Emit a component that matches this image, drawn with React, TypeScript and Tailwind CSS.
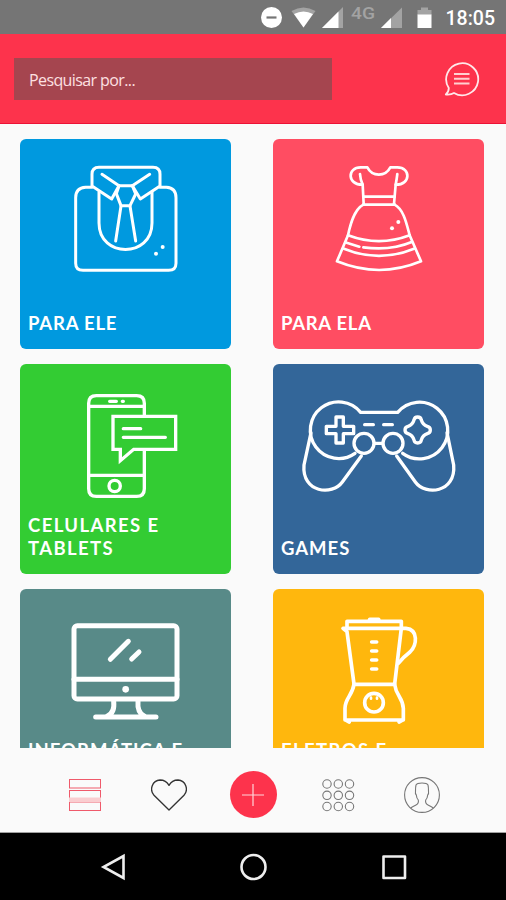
import React from 'react';

const strokeProps = {
  fill: 'none',
  stroke: 'currentColor',
  strokeLinecap: 'round' as const,
  strokeLinejoin: 'round' as const
};

function ShirtIcon() {
  return (
    <svg viewBox="15 12 633 450" className="w-full h-[150px]" {...strokeProps} strokeWidth={9}>
      <path d="M231 157 L212 157 Q182 159 182 188 V385 Q182 406 204 406 H461 Q483 406 483 385 V188 Q483 159 454 157 L435 157" />
      <path d="M312 152 L290 192 L231 153 V118 Q231 97 252 97 H414 Q435 97 435 118 V153 L376 192 L352 152" />
      <path d="M261 118 L312 152 M404 118 L352 152" />
      <path d="M312 152 H352 M312 152 L304 176 L318 212 H345 L362 177 L352 152" />
      <path d="M318 213 L302 318 M345 213 L362 318" />
      <path d="M252 171 V264 C252 370 411 370 411 264 V171" />
      <circle cx={443} cy={336} r={6} fill="currentColor" stroke="none" />
      <circle cx={423} cy={356} r={6} fill="currentColor" stroke="none" />
    </svg>
  );
}

function DressIcon() {
  return (
    <svg viewBox="15 12 633 450" className="w-full h-[150px]" {...strokeProps} strokeWidth={8}>
      <path d="M284 149 C237 150 237 97 278 97 H298 C313 126 352 126 367 97 H388 C429 97 429 150 383 149" />
      <path d="M276 117 Q277 134 284 149 L287 207 M388 117 Q386 134 383 149 L378 207" />
      <path d="M286 185 H380 M286 209 H380" />
      <path d="M286 209 C258 224 247 268 240 301 L207 379 Q334 431 459 379 L425 301 C416 268 408 224 380 209" />
      <path d="M240 301 Q333 336 425 301 M236 323 L274 335 M286 337 Q368 348 431 321 M228 341 Q333 384 438 341" />
      <circle cx={391} cy={261} r={6} fill="currentColor" stroke="none" />
      <circle cx={372} cy={280} r={6} fill="currentColor" stroke="none" />
    </svg>
  );
}

function PhoneIcon() {
  return (
    <svg viewBox="15 12 633 450" className="w-full h-[150px]" {...strokeProps} strokeWidth={10}>
      <path d="M388 168 V130 Q388 107 365 107 H244 Q221 107 221 130 V386 Q221 409 244 409 H365 Q388 409 388 386 V273" />
      <path d="M221 139 H388 M221 346 H388" />
      <path d="M284 124 H304 M322 124 H325" />
      <circle cx={299} cy={378} r={17} />
      <path d="M294 169 H482 V268 H356 L316 302 V268 H294 Z" strokeLinejoin="miter" />
      <path d="M325 206 H377 M325 232 H451" />
    </svg>
  );
}

function GamepadIcon() {
  return (
    <svg viewBox="15 12 633 450" className="w-full h-[150px]" {...strokeProps} strokeWidth={10}>
      <path d="M261 280 A85 85 0 1 1 278 157 H389 A85 85 0 1 1 404 280" />
      <path d="M129 218 L108 315 C101 399 193 408 223 366 L280 288" />
      <path d="M537 218 L557 315 C564 399 472 408 442 366 L386 288" />
      <circle cx={288} cy={250} r={30} />
      <circle cx={375} cy={250} r={30} />
      <path d="M319 250 H344 M290 194 H316 M347 194 H373" />
      <path d="M204 171 H226 V199 H257 V221 H226 V249 H204 V221 H175 V199 H204 Z" />
      <path d="M438 180 C440 168 458 168 460 180 Q464 194 478 199 C490 202 490 218 478 221 Q464 226 460 240 C458 252 440 252 438 240 Q434 226 420 221 C408 218 408 202 420 199 Q434 194 438 180 Z" />
    </svg>
  );
}

function MonitorIcon() {
  return (
    <svg viewBox="15 12 633 450" className="w-full h-[150px]" {...strokeProps} strokeWidth={15}>
      <rect x={177} y={122} width={309} height={220} rx={10} />
      <path d="M177 283 H486" />
      <path d="M286 223 L340 169 M350 222 L372 201" />
      <path d="M296 349 Q300 384 277 393 M369 349 Q366 384 388 393 M242 396 H423" />
      <circle cx={332} cy={313} r={10} fill="currentColor" stroke="none" />
    </svg>
  );
}

function BlenderIcon() {
  return (
    <svg viewBox="15 12 633 450" className="w-full h-[150px]" {...strokeProps} strokeWidth={11}>
      <path d="M305 103 H332" />
      <path d="M237 128 V109 H400 V128" />
      <path d="M237 140 L225 130 H400 L380 297 M237 140 L258 297" />
      <path d="M400 130 H414 C452 134 447 180 426 201 Q404 218 391 235" />
      <path d="M258 298 H380 M258 298 C253 333 231 339 231 370 V405 H406 V370 C404 336 384 333 380 298" />
      <path d="M236 407 L244 411 M401 407 L393 411" />
      <path d="M311 171 H326 M311 198 H326 M311 225 H326 M311 252 H326" />
      <circle cx={318} cy={353} r={28} />
      <path d="M309 338 V341 M327 338 V341" strokeWidth={8} />
    </svg>
  );
}

const categories = [
  { title: 'PARA ELE', icon: ShirtIcon, color: 'bg-[#0099df]', tracking: 'tracking-[0.8px]' },
  { title: 'PARA ELA', icon: DressIcon, color: 'bg-[#ff4d62]', tracking: 'tracking-[0.7px]' },
  { title: 'CELULARES E TABLETS', icon: PhoneIcon, color: 'bg-[#33cc33]', tracking: 'tracking-[1.4px]' },
  { title: 'GAMES', icon: GamepadIcon, color: 'bg-[#336699]', tracking: 'tracking-[1px]' },
  { title: 'INFORMÁTICA E TABLETS', icon: MonitorIcon, color: 'bg-[#588a88]', tracking: 'tracking-[1px]' },
  { title: 'ELETROS E PORTÁTEIS', icon: BlenderIcon, color: 'bg-[#ffb70d]', tracking: 'tracking-[1.4px]' }
];

function StatusBar() {
  return (
    <div className="h-[34px] shrink-0 bg-[#757575] flex items-center justify-end pr-[11px] text-white font-['Roboto']">
      <svg viewBox="0 0 184 34" className="w-[184px] h-[34px]" fill="#fff">
        <circle cx={21.5} cy={17.5} r={10.5} />
        <path d="M16.5 17.5 H26.5" stroke="#757575" strokeWidth={2.2} />
        <path d="M41.5 11 Q53.5 4 65.5 11 L53.5 27.5 Z" fill="#a3a3a3" />
        <path d="M44 14 Q53.5 9 63 14 L53.5 27.5 Z" />
        <path d="M93 7 V28 H72 Z" fill="#a3a3a3" />
        <path d="M88.5 11.5 V28 H72 Z" />
        <text x={101} y={18.5} fontSize={17} fontWeight={500} fill="#a3a3a3" textLength={24} lengthAdjust="spacingAndGlyphs">4G</text>
        <path d="M152 7.5 V28 H131 Z" fill="#a3a3a3" />
        <path d="M141 18 V28 H131 Z" />
        <path d="M171 7.5 H178 V10 H181.5 V15 H167.5 V10 H171 Z" fill="#a3a3a3" />
        <rect x={167.5} y={14.5} width={14} height={13.5} />
      </svg>
      <span className="ml-[12px] text-[19.5px] leading-none font-medium pt-[3px]">18:05</span>
    </div>
  );
}

function Header() {
  return (
    <header className="h-[90px] shrink-0 bg-[#fd334c] border-b border-[#ec1236] flex items-center justify-between pl-[14px] pr-[26px] pt-px">
      <div className="w-[318px] h-[42px] bg-[#a5454f] flex items-center pl-[15px] pt-[2px] text-[16px] text-[#fde0e2] font-['Open_Sans',sans-serif]">
        <span className="tracking-[-0.6px]">Pesquisar por...</span>
      </div>
      <svg viewBox="0 0 36 36" className="w-9 h-9" fill="none" stroke="#ffe8ea" strokeWidth={1.8} strokeLinejoin="round">
        <path d="M4.8 27 A16 16 0 1 1 10 32 Q7 34 1.8 33.500 Q4.800 31 4.800 27 Z" />
        <path d="M10 13 H25.5 M10 17.7 H25.5 M10 22.500 H25.5" stroke="#ffd0d0" strokeWidth={2} />
      </svg>
    </header>
  );
}

function TabBar() {
  return (
    <div className="h-[85px] shrink-0 bg-[#fafafa] border-b border-[#a0a0a0] grid grid-cols-5 items-center justify-items-center pl-[43px] pr-[42px] pt-[9px]">
      <svg viewBox="0 0 36 36" className="w-9 h-9" fill="none" stroke="#ef5a6b" strokeWidth={1}>
        <rect x={2.5} y={2.5} width={31} height={8.5} />
        <rect x={2.5} y={13.5} width={31} height={8.5} />
        <rect x={2.5} y={25} width={31} height={8.5} />
        <rect x={2} y={20.5} width={32} height={4.5} fill="#facdd0" stroke="none" />
      </svg>
      <svg viewBox="334 94 108 108" className="w-9 h-9" fill="none" stroke="#333" strokeWidth={4} strokeLinejoin="round">
        <path d="M388 193 L343 149 C328 132 338 104 361 103 Q379 103 388 119 Q397 103 415 103 C438 104 448 132 433 149 Z" />
      </svg>
      <div className="w-[47px] h-[47px] rounded-full bg-[#fd334c] flex items-center justify-center">
        <svg viewBox="0 0 22 22" className="w-[22px] h-[22px]" stroke="#ffd5d9" strokeWidth={1.2}>
          <path d="M11 0 V22 M0 11 H22" />
        </svg>
      </div>
      <svg viewBox="0 0 36 36" className="w-9 h-9" fill="none" stroke="#777" strokeWidth={1.1}>
        {[7, 18.3, 29.5].map((y) =>
          [7, 18.3, 29.5].map((x) => <circle key={`${x}-${y}`} cx={x} cy={y} r={4.2} />)
        )}
      </svg>
      <svg viewBox="0 0 36 36" className="w-9 h-9" fill="none" stroke="#777" strokeWidth={1.1}>
        <circle cx={18} cy={18} r={17.4} />
        <path d="M6.500 31 Q9 29.500 12 28 Q15 26.500 14.300 23 Q12.500 21 12.300 18 Q11 17 11.500 14 Q11.500 10 12 8 Q13 6 18 6 Q23 6 24 8 Q24.500 10 24.500 14 Q25 17 23.700 18 Q23.500 21 21.700 23 Q21 26.500 24 28 Q27 29.500 29.500 31" />
      </svg>
    </div>
  );
}

function NavBar() {
  return (
    <div className="h-[67px] shrink-0 bg-black flex items-center justify-between px-[98px]">
      <svg viewBox="0 0 30 30" className="w-[30px] h-[30px]" fill="none" stroke="#eee" strokeWidth={2.6}>
        <path d="M25.5 4 V26 L5.5 15 Z" />
      </svg>
      <svg viewBox="0 0 30 30" className="w-[30px] h-[30px]" fill="none" stroke="#eee" strokeWidth={2.6}>
        <circle cx={15.5} cy={15} r={12} />
      </svg>
      <svg viewBox="0 0 30 30" className="w-[30px] h-[30px]" fill="none" stroke="#eee" strokeWidth={2.6} strokeLinejoin="round">
        <rect x={5.5} y={4.5} width={21.5} height={21.5} />
      </svg>
    </div>
  );
}

function App() {
  return (
    <div className="w-[506px] h-[900px] flex flex-col overflow-hidden bg-[#fafafa]">
      <StatusBar />
      <Header />
      <main className="flex-1 min-h-0 overflow-hidden px-5 pt-[15px]">
        <div className="grid grid-cols-[211px_211px] gap-x-[42px] gap-y-[15px]">
          {categories.map((category) => (
            <div
              key={category.title}
              className={`${category.color} h-[210px] rounded-[6px] flex flex-col text-white overflow-hidden`}
            >
              <category.icon />
              <div className="flex-1 flex flex-col justify-end pl-2 pr-10 pb-[15px]">
                <h2 className={`font-['Lato',sans-serif] font-bold text-[18.5px] leading-[22.5px] ${category.tracking}`}>
                  {category.title}
                </h2>
              </div>
            </div>
          ))}
        </div>
      </main>
      <TabBar />
      <NavBar />
    </div>
  );
}

export default App;
